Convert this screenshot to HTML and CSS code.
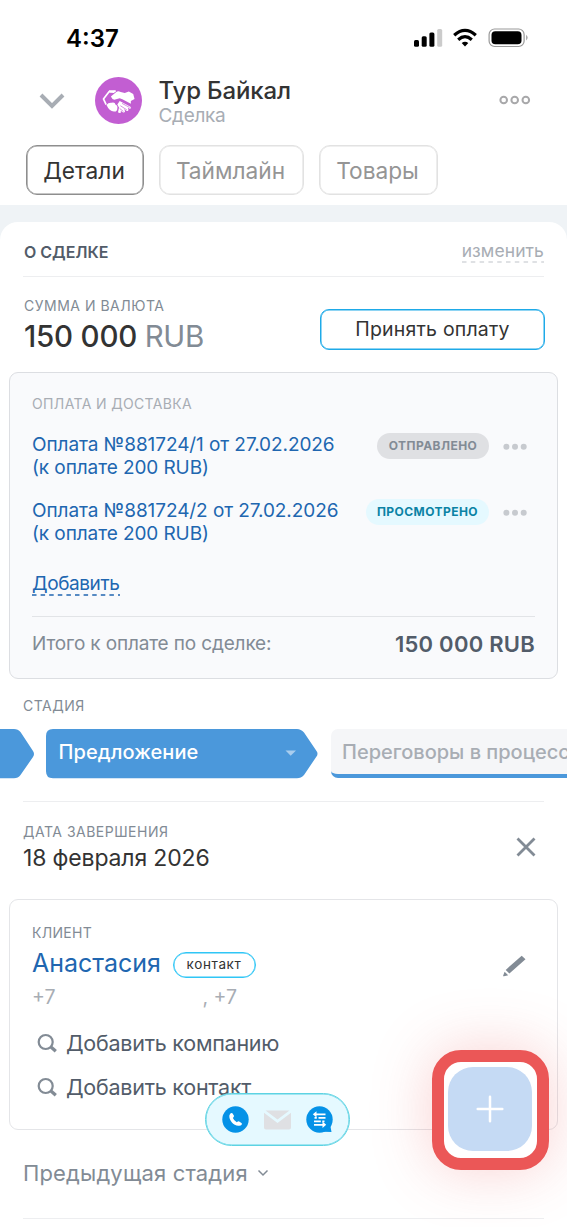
FILE: index.html
```html
<!DOCTYPE html>
<html lang="ru">
<head>
<meta charset="utf-8">
<title>Тур Байкал</title>
<link rel="stylesheet" href="styles.css">
</head>
<body>
<div class="screen">
  <header class="header">
    <div class="status">
      <span class="status-time">4:37</span>
      <svg class="status-icons" width="116" height="20" viewBox="0 0 116 20">
        <rect x="0" y="12" width="5" height="6.7" rx="1.5"/>
        <rect x="7.700" y="8.3" width="5" height="10.4" rx="1.5"/>
        <rect x="15.400" y="4.5" width="5" height="14.2" rx="1.5"/>
        <rect x="23.200" y="1" width="5" height="17.7" rx="1.5" fill="#cbcbcb"/>
        <g fill="none" stroke="#000" stroke-width="3.2">
          <path d="M40.200 7.200Q51 -2.600 61.800 7.200"/>
          <path d="M44.200 11.700Q51 5.700 57.800 11.700"/>
        </g>
        <path d="M47.700 15.100Q51 12.400 54.300 15.100L51 18.500Z"/>
        <rect x="75.100" y="1" width="35" height="17.500" rx="5.500" fill="none" stroke="#999" stroke-width="1.200"/>
        <rect x="77.500" y="3.200" width="30" height="13" rx="3.800"/>
        <path d="M112.200 6.800Q115 9.600 112.200 12.400Z" fill="#999"/>
      </svg>
    </div>
    <div class="title-row">
      <svg class="back" width="26" height="18" viewBox="0 0 26 18"><path d="M2 3L13 14L24 3" fill="none" stroke="#a8adb4" stroke-width="4"/></svg>
      <svg class="avatar" width="47" height="47" viewBox="284 231 139 139">
        <circle cx="353.500" cy="300.500" r="69.500" fill="#c25ed2"/>
        <path d="M317 313L309 296L326 274L345 273" fill="none" stroke="#fff" stroke-width="5" stroke-linejoin="round"/>
        <path d="M325 270L346 272L340 278L327 277Z" fill="#fff"/>
        <path d="M331 289L347 275Q352 272 360 275L372 278L384 274L397 281L401 296L390 302L390 310L365 297L357 294L341 298Q334 297 331 289Z" fill="#fff"/>
        <path d="M318 314Q323 306 333 307Q343 304 345 313Q352 316 350 324Q349 335 340 333Q326 332 318 314Z" fill="#fff"/>
        <path d="M357 302L389 319Q392 325 386 325L381 322L383 327Q383 333 377 331L370 326L373 332Q371 338 366 335L360 331L361 336Q356 339 352 335L355 321L350 312Z" fill="#fff"/>
        <path d="M364 309L386 321M359 316L378 328M357 324L368 333" stroke="#c25ed2" stroke-width="2"/>
      </svg>
      <div class="titles">
        <div class="title">Тур Байкал</div>
        <div class="subtitle">Сделка</div>
      </div>
      <svg class="menu" width="32" height="12" viewBox="0 0 32 12" fill="none" stroke="#a8a8aa" stroke-width="2"><circle cx="4.700" cy="6" r="3.300"/><circle cx="15.700" cy="6" r="3.300"/><circle cx="26.800" cy="6" r="3.300"/></svg>
    </div>
    <nav class="tabs">
      <span class="tab tab-details active">Детали</span>
      <span class="tab tab-timeline">Таймлайн</span>
      <span class="tab tab-goods">Товары</span>
    </nav>
  </header>

  <main class="card">
    <div class="section-head">
      <span class="section-title">О СДЕЛКЕ</span>
      <span class="edit">изменить<svg class="dash" width="82" height="2"><path d="M0 1H82" stroke="#d5d8dc" stroke-width="1.300" stroke-dasharray="4.500 4.300"/></svg></span>
    </div>

    <div class="amount-row">
      <div>
        <div class="label label-sum">СУММА И ВАЛЮТА</div>
        <div class="amount">150 000 <span class="currency">RUB</span></div>
      </div>
      <div class="pay-button">Принять оплату</div>
    </div>

    <section class="payments">
      <div class="label label-pay">ОПЛАТА И ДОСТАВКА</div>
      <div class="payment">
        <div class="payment-link">Оплата №881724/1 от 27.02.2026<br>(к оплате 200 RUB)</div>
        <span class="badge sent">ОТПРАВЛЕНО</span>
        <svg class="dots" width="24" height="26" viewBox="0 0 24 26" fill="#c7cacf"><circle cx="3.400" cy="13.700" r="3"/><circle cx="12" cy="13.700" r="3"/><circle cx="20.700" cy="13.700" r="3"/></svg>
      </div>
      <div class="payment">
        <div class="payment-link">Оплата №881724/2 от 27.02.2026<br>(к оплате 200 RUB)</div>
        <span class="badge seen">ПРОСМОТРЕНО</span>
        <svg class="dots" width="24" height="26" viewBox="0 0 24 26" fill="#c7cacf"><circle cx="3.400" cy="13.700" r="3"/><circle cx="12" cy="13.700" r="3"/><circle cx="20.700" cy="13.700" r="3"/></svg>
      </div>
      <div class="add"><span>Добавить</span><svg class="dash" width="88" height="2"><path d="M0 1H88" stroke="#2066b0" stroke-width="1.300" stroke-dasharray="4.500 4.100"/></svg></div>
      <div class="total">
        <span class="total-label">Итого к оплате по сделке:</span>
        <span class="total-value">150 000 RUB</span>
      </div>
    </section>

    <div class="label label-stage">СТАДИЯ</div>
    <div class="stages">
      <svg class="stage-prev" width="34" height="50" viewBox="0 0 34 50"><path d="M0 0H14Q18 0 20.500 3L33 22Q35 25 33 28L20.500 46Q18 49.300 14 49.300H0Z" fill="#4b98db"/></svg>
      <div class="stage-current">
        <svg class="stage-shape" width="272" height="50" viewBox="0 0 272 50"><path d="M7 0H251Q255 0 258 3.500L270.500 22Q272.500 24.700 270.500 27.500L258 46Q255 49.300 251 49.300H7Q0 49.300 0 42.300V7Q0 0 7 0Z" fill="#4b98db"/><path d="M239.500 21.500H250L244.700 26.800Z" fill="#a9cdee"/></svg>
        <span class="stage-name">Предложение</span>
      </div>
      <div class="stage-next"><span>Переговоры в процессе</span></div>
    </div>

    <div class="date-row">
      <div>
        <div class="label label-date">ДАТА ЗАВЕРШЕНИЯ</div>
        <div class="date">18 февраля 2026</div>
      </div>
      <svg class="close" width="20" height="20" viewBox="0 0 20 20"><path d="M1.500 1.500L18.500 18.500M18.500 1.500L1.500 18.500" stroke="#828b95" stroke-width="2.800"/></svg>
    </div>

    <section class="client">
      <div class="label label-client">КЛИЕНТ</div>
      <div class="client-row">
        <span class="client-name">Анастасия</span>
        <span class="contact-badge">контакт</span>
        <svg class="pencil" width="24" height="22" viewBox="0 0 24 22" fill="#828b95"><path d="M19.700.7L23.500 4.300L7.400 18.500L3.700 14.900ZM2.600 16.800L6.200 20.200L2 21.300Q.9 21.500 1.200 20.400Z"/></svg>
      </div>
      <div class="phones"><span class="phone">+7</span><span>, +7</span></div>
      <div class="search-row"><svg width="20" height="20" viewBox="0 0 20 20" fill="none" stroke="#828b95"><circle cx="8.700" cy="9" r="7" stroke-width="2.200"/><path d="M13.700 13.700L18.800 18.300" stroke-width="3.200"/></svg><span>Добавить компанию</span></div>
      <div class="search-row"><svg width="20" height="20" viewBox="0 0 20 20" fill="none" stroke="#828b95"><circle cx="8.700" cy="9" r="7" stroke-width="2.200"/><path d="M13.700 13.700L18.800 18.300" stroke-width="3.200"/></svg><span>Добавить контакт</span></div>
    </section>

    <div class="previous"><span>Предыдущая стадия</span><svg width="12" height="10" viewBox="0 0 12 10"><path d="M1.500 2.500L6 7L10.500 2.500" fill="none" stroke="#828b95" stroke-width="1.500"/></svg></div>
  </main>

  <div class="actions">
    <svg width="27" height="27" viewBox="0 0 27 27"><circle cx="13.500" cy="13.500" r="13.200" fill="#0592e7"/><path d="M7.400 9.200Q8.600 6.400 10.400 7.300L12 9.800Q12.200 10.800 10.900 11.900Q11.900 14.600 14.800 16.200Q16.300 14.900 17.200 15.400L19.800 17.200Q20.300 19.300 17.300 19.700C12.200 20.600 6.500 14 7.400 9.200Z" fill="#fff"/></svg>
    <svg width="27" height="20" viewBox="0 0 27 20" fill="#dfe0e3"><path d="M1.500.5H25.500L13.500 9.600ZM0 2.800L13.500 13L27 2.800V17.500Q27 19.500 25 19.500H2Q0 19.500 0 17.500Z"/></svg>
    <svg width="27" height="27" viewBox="0 0 27 27"><circle cx="13.500" cy="13.500" r="13.200" fill="#0592e7"/><path d="M17 25.800L25.500 26L24 18Z" fill="#0592e7"/><path d="M9 8.300H19.500M8.500 11.800H10.800M12.500 11.800H19.500M8 15.300H14.800M16.300 15.300H18.500M8 18.800H18" stroke="#fff" stroke-width="1.800"/><path d="M10.500 5.200L6.800 8.300L10.500 11.500ZM16.500 15.600L20.200 18.800L16.500 22Z" fill="#fff"/></svg>
  </div>

  <div class="highlight">
    <div class="fab"><svg width="28" height="28" viewBox="0 0 28 28"><path d="M14 1.700V26.300M1.700 14H26.300" stroke="#fff" stroke-width="2.500" stroke-linecap="round"/></svg></div>
  </div>
</div>
</body>
</html>
```
FILE: styles.css
```css
* { box-sizing: border-box; }
body {
  margin: 0;
  font-family: Inter, "Liberation Sans", sans-serif;
  color: #333;
}
svg { display: block; flex: none; }
.screen {
  position: relative;
  width: 567px;
  height: 1227px;
  overflow: hidden;
  background: #eff3f6;
  white-space: nowrap;
}

/* Header */
.header { height: 205px; background: #fff; }
.status {
  display: flex;
  align-items: center;
  justify-content: space-between;
  height: 76px;
  padding: 0 37px 0 66px;
}
.status-time { font-size: 24px; font-weight: 600; color: #000; }
.title-row { display: flex; align-items: center; height: 50px; padding: 0 36px 0 39px; }
.avatar { margin: -2px 18px 0 29.500px; }
.titles { flex: 1; padding-top: 2px; }
.title { font-size: 24px; font-weight: 500; line-height: 28px; letter-spacing: -0.150px; }
.subtitle { font-size: 19px; line-height: 22px; letter-spacing: -0.300px; color: #a8adb4; }
.titles { margin-left: -1px; }
.menu { margin-top: -2px; }
.tabs { display: flex; gap: 15px; padding: 19px 0 0 26px; }
.tab {
  height: 50px;
  border: 1px solid #e2e2e2;
  border-radius: 11px;
  box-shadow: inset 0 0 0 0.600px #e2e2e2;
  padding-right: 2px;
  font-size: 22.700px;
  line-height: 49px;
  text-align: center;
  color: #959595;
}
.tab.active { border-color: #8e8e8e; box-shadow: inset 0 0 0 0.600px #8e8e8e; color: #333; }
.tab-details { width: 118px; }
.tab-timeline { width: 145px; }
.tab-goods { width: 119px; }

/* Card */
.card {
  height: 1005px;
  margin-top: 17px;
  border-radius: 18px 18px 0 0;
  background: #fff;
}
.label { font-size: 14px; line-height: 20px; letter-spacing: 0.500px; color: #828b95; }
.section-head {
  display: flex;
  justify-content: space-between;
  height: 55px;
  margin: 0 23px;
  border-bottom: 1px solid #edeef0;
}
.section-title { padding-left: 1px; font-size: 16px; font-weight: 600; line-height: 61px; color: #525c69; }
.edit { height: 42px; padding-top: 19px; font-size: 17.500px; line-height: 20px; letter-spacing: 0.100px; color: #a8adb4; }
.amount-row {
  display: flex;
  justify-content: space-between;
  height: 95px;
  padding: 19px 22px 0 24px;
}
.amount { font-size: 29.500px; font-weight: 500; line-height: 40px; letter-spacing: -0.200px; }
.currency { font-weight: 400; letter-spacing: -0.400px; color: #828b95; }
.pay-button {
  width: 225px;
  height: 41px;
  margin-top: 13px;
  border: 1px solid #1eaae8;
  border-radius: 9px;
  box-shadow: inset 0 0 0 0.500px #1eaae8;
  font-size: 19.500px;
  line-height: 39px;
  letter-spacing: 0.200px;
  text-align: center;
}

/* Payments */
.payments {
  height: 307px;
  margin: 0 9px;
  padding: 21px 22px 0;
  border: 1px solid #dcdee2;
  border-radius: 9px;
  background: #f9fafc;
}
.label-pay { letter-spacing: 0.350px; color: #a8adb4; }
.payment { display: flex; height: 66px; }
.label-pay + .payment { margin-top: 19px; }
.payment-link { flex: 1; font-size: 19px; line-height: 23px; letter-spacing: -0.080px; color: #2066b0; }
.badge {
  height: 26px;
  border-radius: 13px;
  font-size: 12px;
  font-weight: 700;
  line-height: 26px;
  letter-spacing: 0.450px;
  text-align: center;
}
.sent { width: 112px; background: #dfe0e3; color: #828b95; }
.seen { width: 123px; background: #e5f9ff; color: #0b83a5; }
.dots { margin: 0 8px 0 14px; }
.add { height: 51px; padding-top: 7px; font-size: 19px; line-height: 23px; letter-spacing: -0.400px; color: #2066b0; }
.add .dash { margin-top: -1px; }
.total {
  display: flex;
  align-items: center;
  justify-content: space-between;
  height: 54px;
  border-top: 1px solid #e2e4e7;
}
.total-label { font-size: 19px; letter-spacing: -0.150px; color: #828b95; }
.total-value { font-size: 22px; font-weight: 600; letter-spacing: 0.250px; color: #525c69; }

/* Stages */
.label-stage { margin: 17px 0 13px 23px; }
.stages { display: flex; height: 50px; overflow: hidden; }
.stage-current { position: relative; width: 272px; margin: 0 13px 0 12px; flex: none; }
.stage-shape { position: absolute; inset: 0; }
.stage-name {
  position: relative;
  padding-left: 12.500px;
  font-size: 20px;
  font-weight: 500;
  line-height: 47px;
  letter-spacing: 0.100px;
  color: #fff;
}
.stage-next {
  flex: none;
  width: 270px;
  height: 49px;
  padding-left: 11px;
  border-bottom: 4px solid #4b98db;
  border-radius: 7px;
  background: #f5f6f8;
  font-size: 20px;
  font-weight: 500;
  line-height: 47px;
  color: #a8adb4;
}
.date-row {
  display: flex;
  justify-content: space-between;
  height: 98px;
  margin: 22px 23px 0;
  padding: 20px 8px 0 0;
  border-top: 1px solid #edeef0;
}
.date { font-size: 23px; line-height: 33px; letter-spacing: -0.150px; }
.close { margin-top: 15px; }

/* Client */
.client {
  height: 231px;
  margin: 0 9px;
  padding: 23px 22px 0;
  border: 1px solid #e4e5e8;
  border-radius: 9px;
}
.label-client { letter-spacing: 0.300px; }
.client-row { display: flex; align-items: center; height: 40px; }
.client-name { width: 140.500px; font-size: 25px; color: #2066b0; }
.contact-badge {
  width: 83px;
  height: 26px;
  margin-top: 3px;
  border: 1px solid #2fc6f6;
  border-radius: 13px;
  box-shadow: inset 0 0 0 0.500px #2fc6f6;
  font-size: 13.500px;
  line-height: 23px;
  letter-spacing: 0.600px;
  text-align: center;
}
.pencil { margin: 6px 9px 0 auto; }
.phones { display: flex; height: 28px; font-size: 19.500px; line-height: 28px; color: #a8adb4; }
.phone { width: 170.500px; }
.search-row {
  display: flex;
  align-items: center;
  gap: 9px;
  height: 44px;
  padding-left: 5px;
  font-size: 21.500px;
  letter-spacing: -0.250px;
  color: #525c69;
}
.phones + .search-row { margin-top: 10px; }
.previous {
  display: flex;
  align-items: center;
  gap: 9px;
  height: 89px;
  margin: 0 23px;
  padding-bottom: 2px;
  border-bottom: 1px solid #edeef0;
  font-size: 22px;
  letter-spacing: 0.150px;
  color: #828b95;
}

/* Floating controls */
.actions {
  position: absolute;
  left: 205px;
  top: 1093px;
  display: flex;
  align-items: center;
  justify-content: center;
  gap: 15px;
  width: 145px;
  height: 53px;
  border: 1px solid #5dd3e3;
  border-radius: 27px;
  box-shadow: inset 0 0 0 0.500px #5dd3e3;
  background: #e5f9ff;
}
.highlight {
  position: absolute;
  left: 432px;
  top: 1050px;
  width: 117px;
  height: 120px;
  padding: 5px 4px;
  border: 12px solid #eb5757;
  border-radius: 29px;
  background: #fff;
  box-shadow: 0 0 60px rgba(235, 87, 87, 0.280);
}
.fab {
  display: grid;
  place-items: center;
  width: 84px;
  height: 84px;
  border-radius: 25px;
  background: #c5daf4;
}
```
